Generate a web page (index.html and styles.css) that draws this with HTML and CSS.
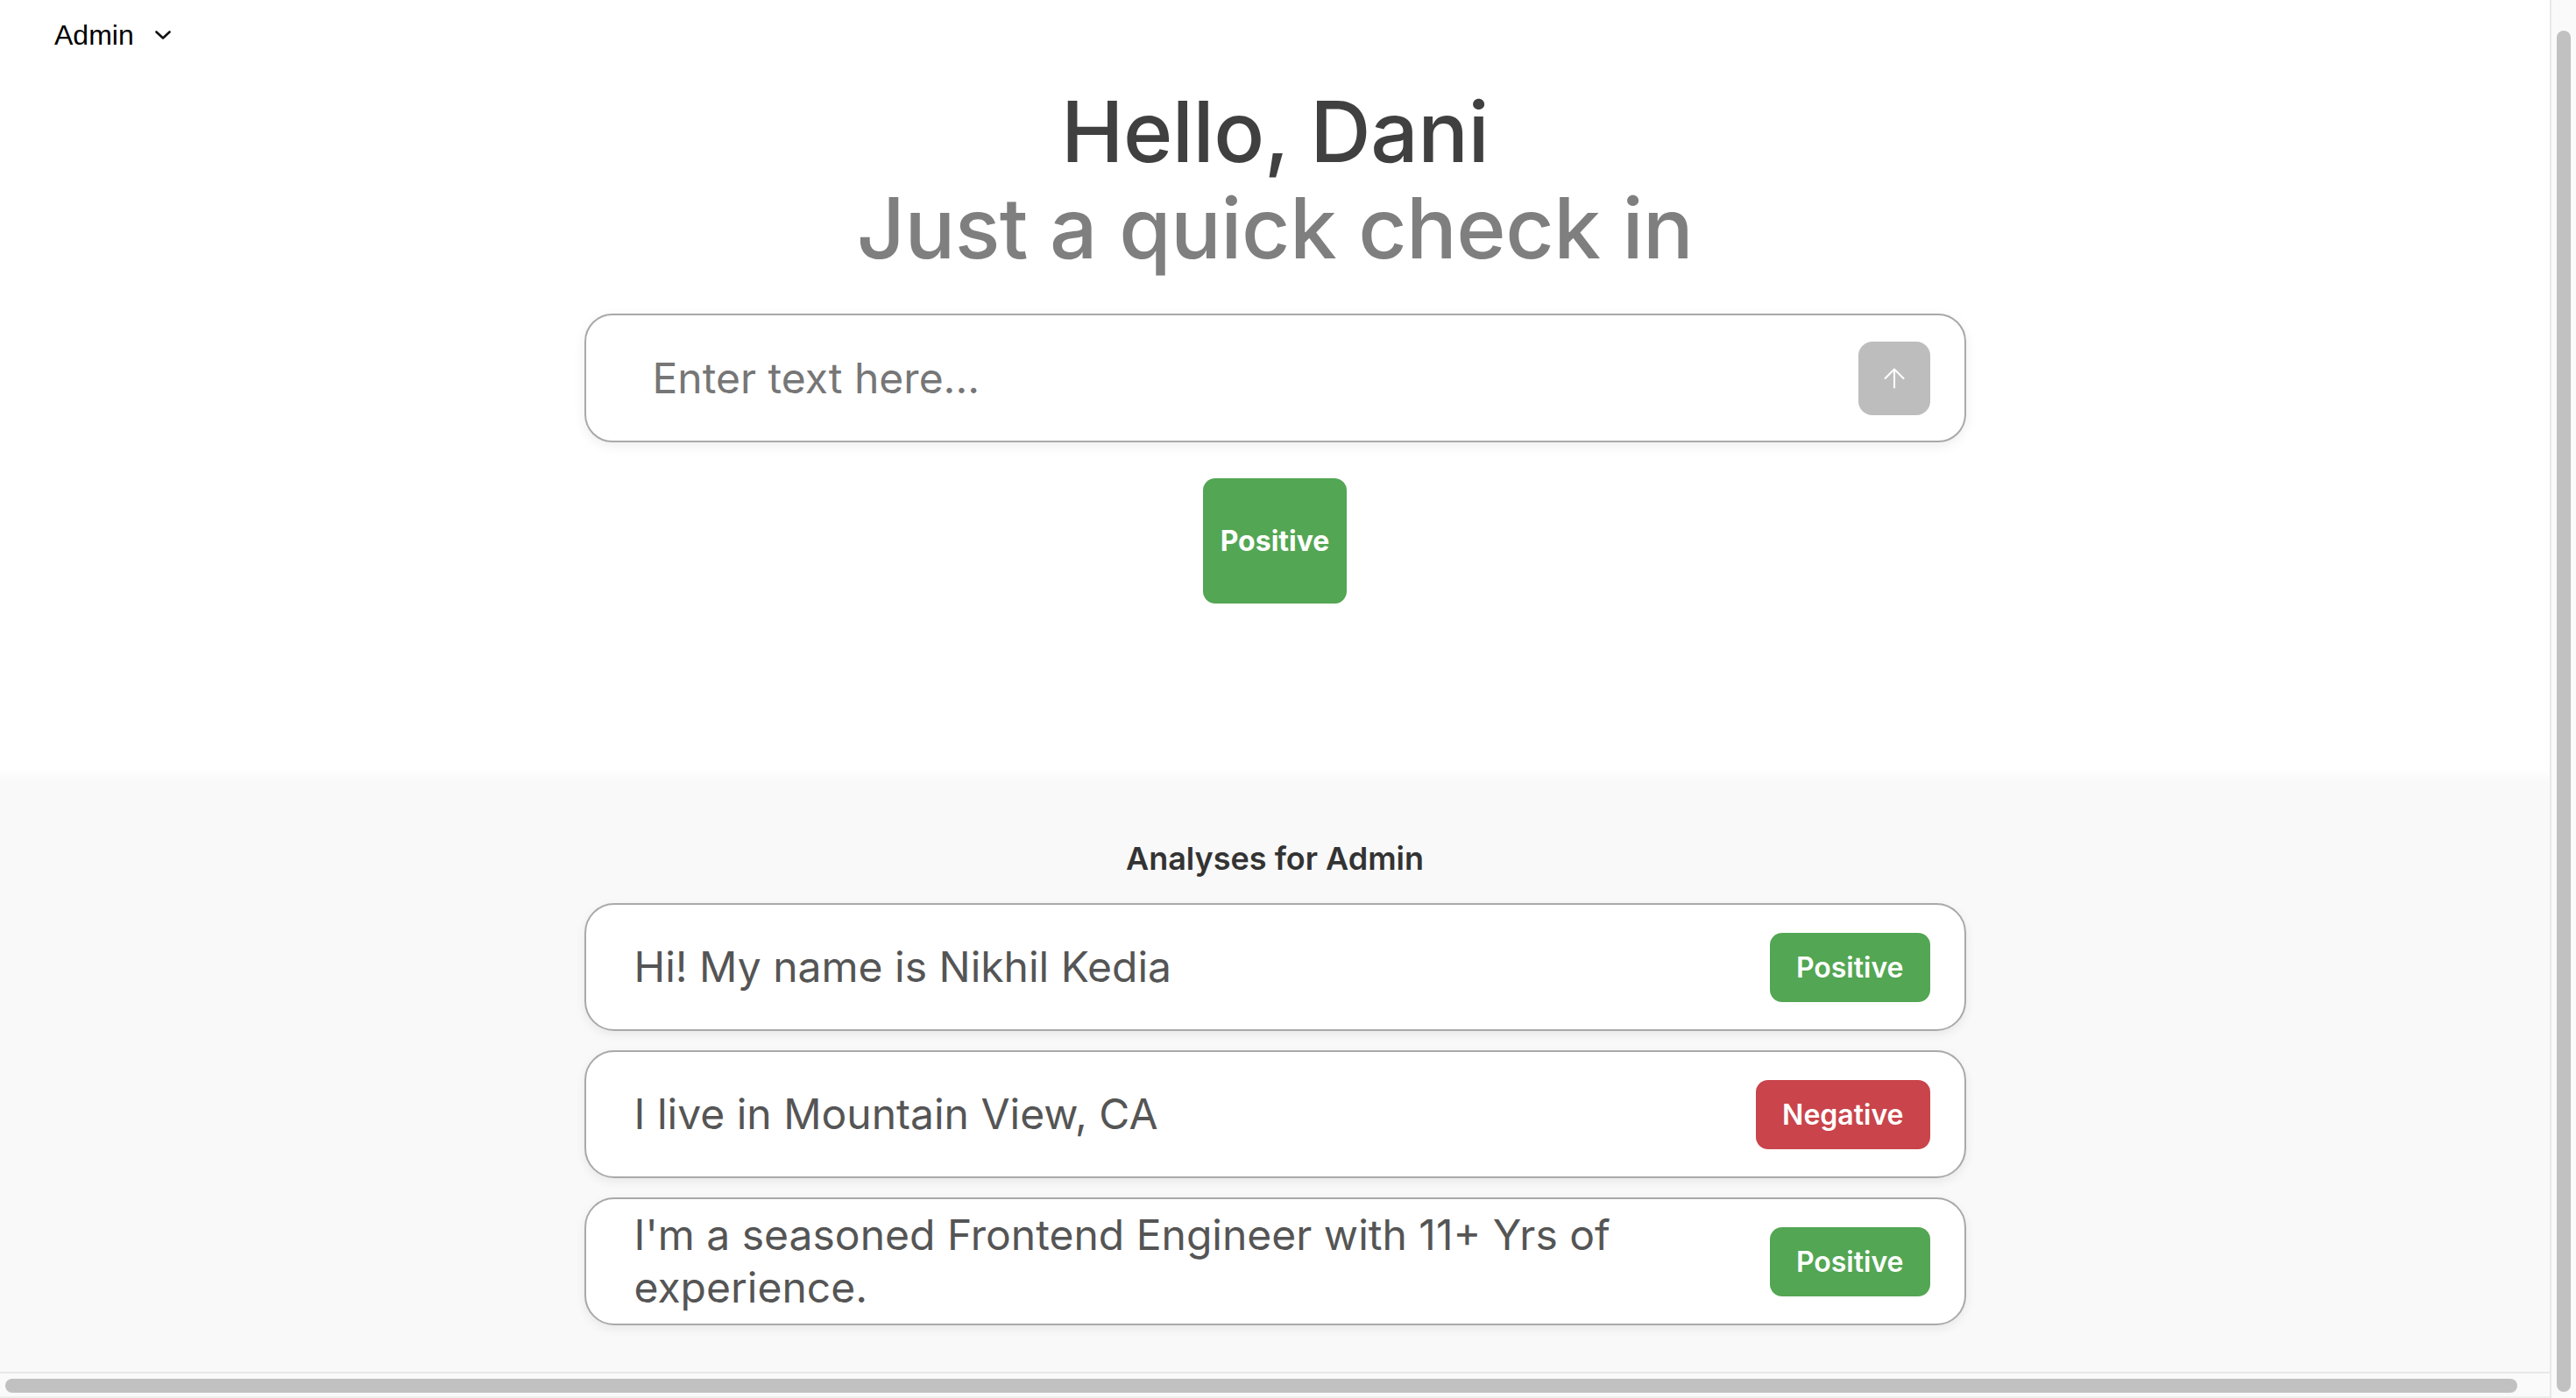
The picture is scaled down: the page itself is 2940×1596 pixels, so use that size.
FILE: index.html
```html
<!DOCTYPE html>
<html lang="en">
<head>
<meta charset="utf-8">
<title>Quick check in</title>
<link rel="stylesheet" href="styles.css">
</head>
<body>
<div class="page">
  <header class="topbar">
    <div class="user-select">
      <span class="user-name">Admin</span>
      <svg class="chevron" width="18" height="10" viewBox="0 0 18 10" aria-hidden="true"><path d="M1.5 1.5 L9 8.5 L16.5 1.5" fill="none" stroke="#111" stroke-width="2.6" stroke-linecap="round" stroke-linejoin="round"/></svg>
    </div>
  </header>

  <main class="hero">
    <h1 class="greeting">
      <span class="hello">Hello, Dani</span>
      <span class="sub">Just a quick check in</span>
    </h1>
    <form class="composer">
      <input class="composer-input" type="text" placeholder="Enter text here...">
      <button class="send" type="button" aria-label="Send">
        <svg width="36" height="36" viewBox="0 0 24 24" aria-hidden="true"><path d="M12 19V5M5 12l7-7 7 7" fill="none" stroke="#fff" stroke-width="1.4" stroke-linecap="round" stroke-linejoin="round"/></svg>
      </button>
    </form>
    <div class="result result-positive">Positive</div>
  </main>

  <section class="analyses">
    <h2 class="analyses-title">Analyses for Admin</h2>
    <ul class="list">
      <li class="card">
        <p class="card-text">Hi! My name is Nikhil Kedia</p>
        <span class="badge badge-positive">Positive</span>
      </li>
      <li class="card">
        <p class="card-text">I live in Mountain View, CA</p>
        <span class="badge badge-negative">Negative</span>
      </li>
      <li class="card">
        <p class="card-text">I'm a seasoned Frontend Engineer with 11+ Yrs of experience.</p>
        <span class="badge badge-positive">Positive</span>
      </li>
    </ul>
  </section>
</div>

<div class="scrollbar scrollbar-v" aria-hidden="true"><div class="thumb thumb-v"></div></div>
<div class="scrollbar scrollbar-h" aria-hidden="true"><div class="thumb thumb-h"></div></div>
</body>
</html>
```
FILE: styles.css
```css
html {
  overflow: hidden;
}

body {
  margin: 0;
  font-family: Inter, "Noto Sans", "Liberation Sans", sans-serif;
  background: #fff;
  color: #111;
}

.page {
  width: 2910px;
  min-height: 1596px;
  display: flex;
  flex-direction: column;
}

/* top bar */
.topbar {
  padding: 16px 0 0 62px;
}

.user-select {
  display: flex;
  align-items: center;
  gap: 24px;
  font-family: "Liberation Sans", Arial, sans-serif;
  font-size: 32px;
  line-height: 48px;
  color: #000;
}

.chevron {
  display: block;
}

/* hero */
.hero {
  display: flex;
  flex-direction: column;
  align-items: center;
  padding-bottom: 188px;
}

.greeting {
  margin: 31px 0 0;
  display: flex;
  flex-direction: column;
  align-items: center;
  font-size: 96px;
  line-height: 110px;
  font-weight: 500;
  letter-spacing: -0.5px;
}

.hello {
  color: #404040;
}

.sub {
  color: #7f7f7f;
}

.composer {
  margin: 43px 0 0;
  width: 1577px;
  box-sizing: border-box;
  display: flex;
  align-items: center;
  gap: 24px;
  padding: 30px 39px 29px 76px;
  border: 2px solid #a9a9a9;
  border-radius: 32px;
  background: #fff;
  box-shadow: 0 4px 14px rgba(0, 0, 0, 0.07);
}

.composer-input {
  flex: 1;
  min-width: 0;
  border: none;
  outline: none;
  padding: 0;
  font-family: inherit;
  font-size: 48px;
  line-height: 60px;
  color: #333;
  background: transparent;
}

.composer-input::placeholder {
  color: #767676;
}

.send {
  width: 82px;
  height: 84px;
  flex: none;
  border: none;
  border-radius: 16px;
  background: #bdbdbd;
  display: flex;
  align-items: center;
  justify-content: center;
  padding: 0;
}

.send svg {
  display: block;
}

.result {
  margin-top: 41px;
  padding: 52px 20px;
  border-radius: 14px;
  font-size: 32px;
  line-height: 39px;
  font-weight: 700;
  color: #fff;
}

.result-positive {
  background: #53a653;
}

/* analyses */
.analyses {
  flex: 1;
  background: linear-gradient(to bottom, #fff 0, #f9f9f9 16px);
  padding: 76px 0 60px;
  display: flex;
  flex-direction: column;
  align-items: center;
}

.analyses-title {
  margin: 0;
  font-size: 36px;
  line-height: 54px;
  font-weight: 600;
  color: #333;
}

.list {
  list-style: none;
  margin: 24px 0 0;
  padding: 0;
  width: 1577px;
  display: flex;
  flex-direction: column;
  gap: 22px;
}

.card {
  box-sizing: border-box;
  min-height: 146px;
  display: flex;
  align-items: center;
  gap: 40px;
  padding: 11px 39px 11px 55px;
  background: #fff;
  border: 2px solid #a9a9a9;
  border-radius: 34px;
  box-shadow: 0 4px 12px rgba(0, 0, 0, 0.07);
}

.card-text {
  flex: 1;
  margin: 0;
  font-size: 48px;
  line-height: 60px;
  color: #555;
}

.badge {
  flex: none;
  padding: 20px 30px;
  border-radius: 14px;
  font-size: 32px;
  line-height: 39px;
  font-weight: 600;
  color: #fff;
}

.badge-positive {
  background: #53a653;
}

.badge-negative {
  background: #c9444b;
}

/* browser scrollbars drawn over the viewport edges */
.scrollbar {
  position: fixed;
  background: #fafafa;
  box-sizing: border-box;
}

.scrollbar-v {
  top: 0;
  right: 0;
  width: 30px;
  height: 1596px;
  border-left: 2px solid #e8e8e8;
}

.scrollbar-h {
  left: 0;
  bottom: 0;
  width: 2910px;
  height: 30px;
  border-top: 2px solid #e8e8e8;
  border-bottom: 2px solid #efefef;
}

.thumb {
  position: absolute;
  background: #c1c1c1;
  border-radius: 8px;
}

.thumb-v {
  top: 35px;
  bottom: 7px;
  left: 6px;
  width: 16px;
}

.thumb-h {
  left: 6px;
  width: 2867px;
  top: 6px;
  height: 16px;
}
```
